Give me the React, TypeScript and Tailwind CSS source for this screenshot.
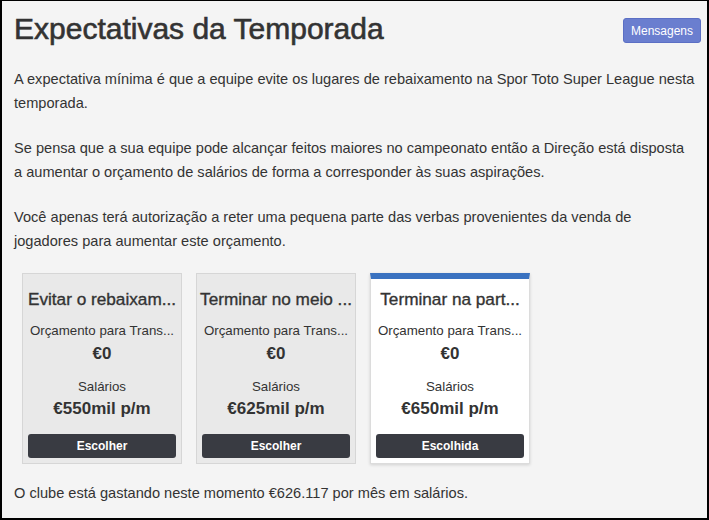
const options = [
  { title: "Evitar o rebaixam...", budget: "€0", wages: "€550mil p/m", chosen: false },
  { title: "Terminar no meio ...", budget: "€0", wages: "€625mil p/m", chosen: false },
  { title: "Terminar na part...", budget: "€0", wages: "€650mil p/m", chosen: true },
];

export default function App() {
  return (
    <div
      className="w-[709px] h-[520px] bg-[#f4f4f4] text-[#333] border-t border-l-2 border-r-2 border-b-2 border-black overflow-hidden"
      style={{ fontFamily: '"Liberation Sans", Arial, sans-serif' }}
    >
      <div className="px-[12px]">
        <div className="flex items-start justify-between pt-[10px] -mr-[6px]">
          <h1 className="text-[30px] leading-[36px] text-[#333] [-webkit-text-stroke:0.6px_#333]">
            Expectativas da Temporada
          </h1>
          <button className="mt-[7px] h-[25px] w-[78px] rounded-[3px] bg-[#6a7ecf] border border-[#5b6fc4] text-white text-[12px]">
            Mensagens
          </button>
        </div>

        <div className="mt-[20px] text-[14.6px] leading-[24px] space-y-[21px]">
          <p>
            A expectativa mínima é que a equipe evite os lugares de rebaixamento na Spor Toto Super League nesta
            temporada.
          </p>
          <p>
            Se pensa que a sua equipe pode alcançar feitos maiores no campeonato então a Direção está disposta a
            aumentar o orçamento de salários de forma a corresponder às suas aspirações.
          </p>
          <p>
            Você apenas terá autorização a reter uma pequena parte das verbas provenientes da venda de jogadores
            para aumentar este orçamento.
          </p>
        </div>

        <div className="flex gap-[14px] mt-[20px] ml-[8px]">
          {options.map((o) => (
            <div
              key={o.title}
              className={
                o.chosen
                  ? "w-[160px] h-[191px] bg-white border border-[#dcdcdc] border-t-[6px] border-t-[#3a72c0] shadow-[0_1px_3px_rgba(0,0,0,0.15)] flex flex-col items-center px-[5px]"
                  : "w-[160px] h-[191px] bg-[#e9e9e9] border border-[#d6d6d6] flex flex-col items-center px-[5px]"
              }
            >
              <div
                className={
                  (o.chosen ? "mt-[10px]" : "mt-[15px]") +
                  " self-stretch -mx-[3px] text-center text-[17.2px] leading-[20px] text-[#333] whitespace-nowrap overflow-hidden [-webkit-text-stroke:0.35px_#333]"
                }
              >
                {o.title}
              </div>
              <div className="mt-[14px] w-full text-center text-[13.3px] leading-[16px] whitespace-nowrap overflow-hidden">
                Orçamento para Trans...
              </div>
              <div className="mt-[5px] text-[17px] leading-[20px] font-bold">{o.budget}</div>
              <div className="mt-[15px] text-[13.3px] leading-[16px]">Salários</div>
              <div className="mt-[4px] text-[17px] leading-[20px] font-bold">{o.wages}</div>
              <button className="mt-auto mb-[5px] w-full h-[24px] rounded-[3px] bg-[#393b42] text-white text-[12px] font-bold">
                {o.chosen ? "Escolhida" : "Escolher"}
              </button>
            </div>
          ))}
        </div>

        <p className="mt-[19px] text-[14.6px] leading-[20px]">
          O clube está gastando neste momento €626.117 por mês em salários.
        </p>
      </div>
    </div>
  );
}
